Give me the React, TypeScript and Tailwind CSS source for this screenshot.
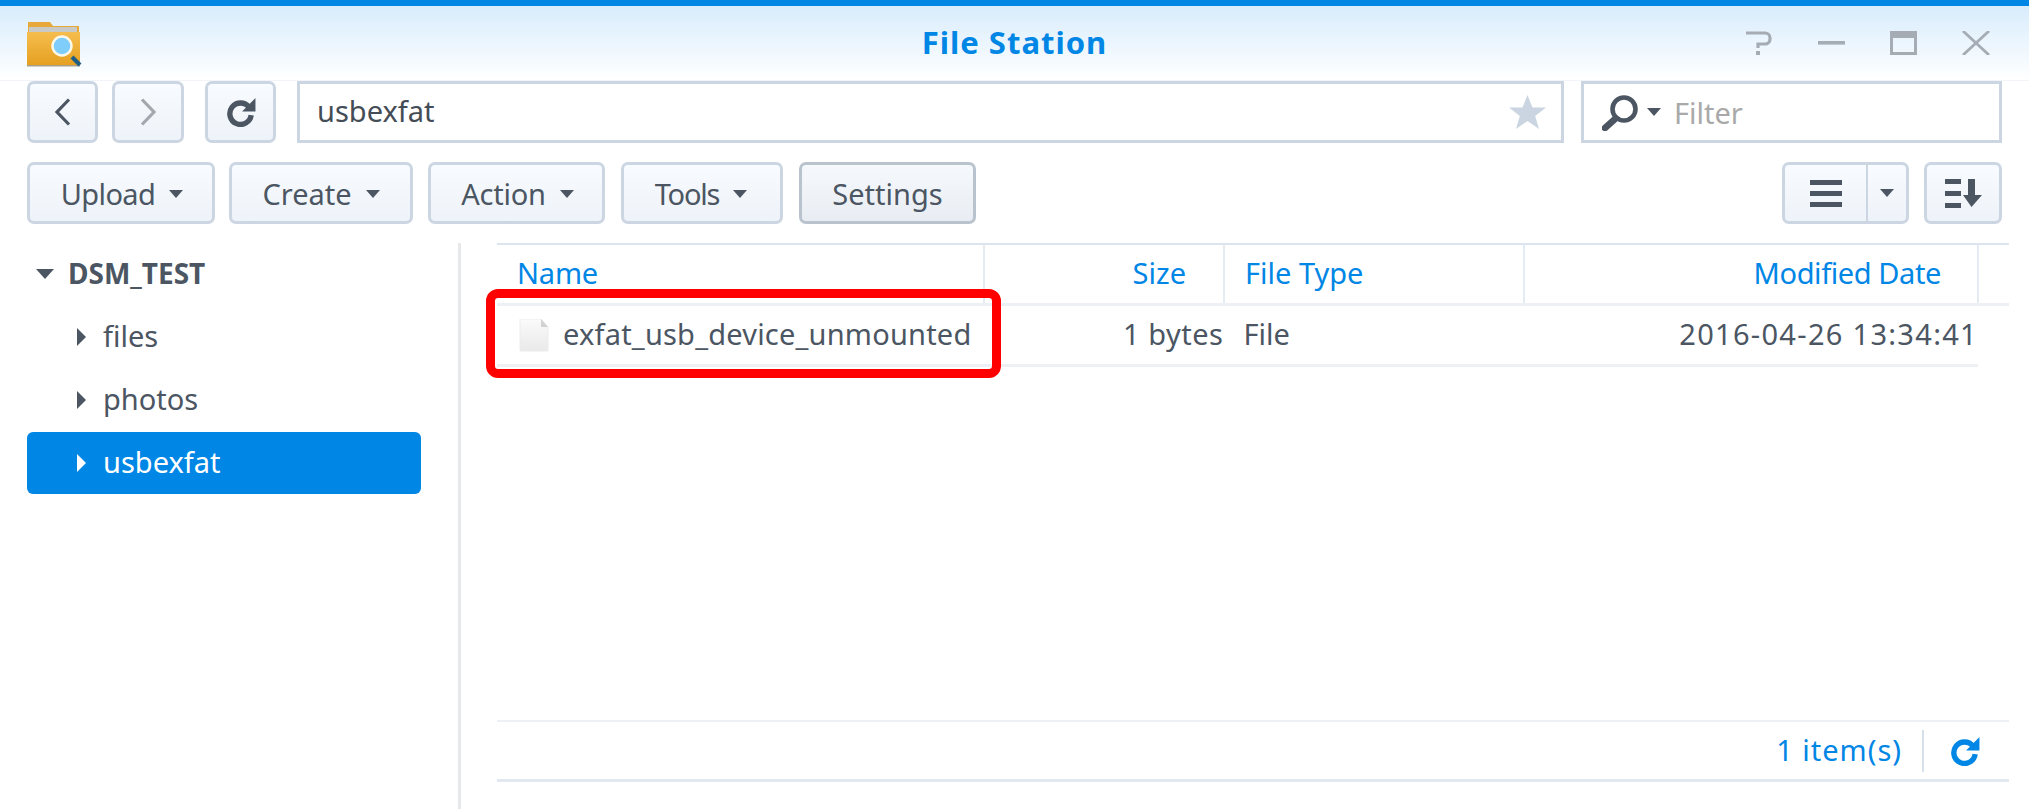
import React from "react";

const Caret = ({ className = "" }: { className?: string }) => (
  <svg width="14" height="8" viewBox="0 0 14 8" className={className}>
    <path d="M0 0h14L7 8z" fill="#4c5663" />
  </svg>
);

const Side = ({ color = "#4c5663" }: { color?: string }) => (
  <svg width="9" height="18" viewBox="0 0 9 18" className="shrink-0">
    <path d="M0 0l9 9-9 9z" fill={color} />
  </svg>
);

const Refresh = ({ color, size }: { color: string; size: number }) => (
  <svg width={size} height={size} viewBox="0 0 28 28">
    <path d="M21.5 9.5A10 10 0 1 0 23.5 17" fill="none" stroke={color} strokeWidth="5" />
    <path d="M27.5 1V13.500H15z" fill={color} />
  </svg>
);

const Btn = ({ label, caret, strong, className = "" }: { label: string; caret?: boolean; strong?: boolean; className?: string }) => (
  <div
    className={
      "h-[62px] flex items-center justify-center gap-[14px] rounded-[7px] border-[3px] text-[29px] text-[#4c5663] " +
      (strong
        ? "border-[#b9c3ce] bg-gradient-to-b from-[#f6f9fc] to-[#e8edf3] "
        : "border-[#ccd6e2] bg-gradient-to-b from-[#f8fbff] to-[#eef3f9] ") +
      className
    }
  >
    <span className="mt-[2px]">{label}</span>
    {caret && <Caret className="mt-[2px]" />}
  </div>
);

const IconBtn = ({ children, w }: { children: React.ReactNode; w: string }) => (
  <div className={"h-[62px] flex items-center justify-center rounded-[7px] border-[3px] border-[#ccd6e2] bg-gradient-to-b from-[#f8fbff] to-[#eef3f9] " + w}>
    {children}
  </div>
);

const TreeRow = ({ label, active }: { label: string; active?: boolean }) => (
  <div
    className={
      "h-[62px] mb-[1px] flex items-center gap-[17px] pl-[50px] rounded-[6px] text-[29px] " +
      (active ? "bg-[#0086e5] text-white" : "text-[#4c5663]")
    }
  >
    <Side color={active ? "#ffffff" : "#4c5663"} />
    <span className="-mt-[2px]">{label}</span>
  </div>
);

export default function App() {
  return (
    <div
      className="relative w-[2029px] h-[809px] overflow-hidden bg-white flex flex-col"
      style={{ fontFamily: '"Noto Sans", sans-serif' }}
    >
      {/* Title bar */}
      <div className="h-[6px] bg-[#0086e5] shrink-0" />
      <div className="h-[75px] shrink-0 relative flex items-center justify-center bg-gradient-to-b from-[#d8ecfc] to-[#ffffff] border-b border-[#f1f4f8]">
        <svg width="56" height="46" viewBox="0 0 56 46" className="absolute left-[26px] top-[15px]">
          <defs>
            <linearGradient id="folder" x1="0" y1="0" x2="0" y2="1">
              <stop offset="0" stopColor="#f6bd4e" />
              <stop offset="1" stopColor="#e5a021" />
            </linearGradient>
          </defs>
          <path d="M2 1h22l3 4h26v12H2z" fill="#e9a93a" />
          <rect x="3" y="6" width="48" height="10" fill="#c9c9c6" />
          <path d="M1 11h53v33H1z" fill="url(#folder)" />
          <path d="M1 44h53v1.5H1z" fill="#a9a08a" />
          <path d="M46 36l8 8" stroke="#1f5f86" strokeWidth="4" />
          <circle cx="36" cy="25" r="9.5" fill="#7fcdfb" stroke="#fdf8e8" strokeWidth="2.4" />
        </svg>
        <span className="text-[31px] font-bold tracking-[1px] text-[#0086e5] -mt-[1px]">File Station</span>
        <div className="absolute right-[39px] top-[25px] flex items-center gap-[45px] h-[24px]">
          <svg width="27" height="24" viewBox="0 0 27 24">
            <path d="M0 2h19a5 5 0 0 1 5 5v1a5 5 0 0 1-5 5h-7v4" fill="none" stroke="#a5acb4" strokeWidth="3.2" />
            <rect x="10" y="20" width="4" height="4" fill="#a5acb4" />
          </svg>
          <svg width="27" height="24" viewBox="0 0 27 24">
            <rect y="10" width="27" height="3.6" fill="#a5acb4" />
          </svg>
          <svg width="27" height="24" viewBox="0 0 27 24">
            <rect x="1.5" y="1.5" width="24" height="21" fill="none" stroke="#a5acb4" strokeWidth="3" />
            <rect y="0" width="27" height="7" fill="#a5acb4" />
          </svg>
          <svg width="28" height="24" viewBox="0 0 28 24">
            <path d="M1 0l26 24M27 0L1 24" stroke="#a5acb4" strokeWidth="2.8" />
          </svg>
        </div>
      </div>

      {/* Address row */}
      <div className="flex items-center h-[62px] pl-[27px] pr-[27px] shrink-0">
        <IconBtn w="w-[71px] mr-[14px]">
          <svg width="17" height="28" viewBox="0 0 17 28">
            <path d="M15 1.5L3 14l12 12.5" fill="none" stroke="#4c5663" strokeWidth="3.2" />
          </svg>
        </IconBtn>
        <IconBtn w="w-[72px] mr-[21px]">
          <svg width="17" height="28" viewBox="0 0 17 28">
            <path d="M2 1.5L14 14 2 26.5" fill="none" stroke="#a2a8ae" strokeWidth="3.2" />
          </svg>
        </IconBtn>
        <IconBtn w="w-[71px] mr-[21px]">
          <Refresh color="#4c5663" size={30} />
        </IconBtn>
        <div className="w-[1267px] h-[62px] flex items-center justify-between border-[3px] border-[#ccd6e2] pl-[17px] pr-[15px] text-[29px] text-[#444c56] mr-[17px]">
          <span className="-mt-[2px]">usbexfat</span>
          <svg width="37" height="34" viewBox="0 0 37 34">
            <path d="M18.5 0l5 12.5H37l-10.800 8.500L30 34 18.500 26 7 34l3.800-13L0 12.500h13.500z" fill="#cbd5e1" />
          </svg>
        </div>
        <div className="flex-1 h-[62px] flex items-center border-[3px] border-[#ccd6e2] pl-[18px]">
          <svg width="37" height="37" viewBox="0 0 37 37">
            <circle cx="22" cy="15" r="11.500" fill="none" stroke="#4c5663" strokeWidth="4.600" />
            <path d="M13 25L3 34" stroke="#4c5663" strokeWidth="6.500" strokeLinecap="round" />
          </svg>
          <Caret className="ml-[8px]" />
          <span className="ml-[13px] mt-[2px] text-[29px] text-[#a9a9a9]">Filter</span>
        </div>
      </div>

      {/* Action row */}
      <div className="flex items-center h-[62px] mt-[19px] pl-[27px] pr-[27px] shrink-0">
        <div className="flex gap-[15px]">
          <Btn label="Upload" caret className="w-[188px] tracking-[-0.6px] pl-[2px]" />
          <Btn label="Create" caret className="w-[184px] -ml-[1px]" />
          <Btn label="Action" caret className="w-[177px] pl-[2px] tracking-[-0.2px]" />
          <Btn label="Tools" caret className="w-[162px] ml-[1px] tracking-[-1.2px] pr-[2px]" />
          <Btn label="Settings" strong className="w-[177px] ml-[1px]" />
        </div>
        <div className="ml-auto flex gap-[15px]">
          <div className="w-[127px] h-[62px] flex rounded-[7px] border-[3px] border-[#ccd6e2] bg-gradient-to-b from-[#f8fbff] to-[#eef3f9]">
            <div className="w-[83px] flex items-center justify-center border-r-[2px] border-[#ccd6e2]">
              <svg width="32" height="27" viewBox="0 0 32 27">
                <path d="M0 0h32v5H0zM0 11h32v5H0zM0 22h32v5H0z" fill="#4c5663" />
              </svg>
            </div>
            <div className="flex-1 flex items-center justify-center">
              <Caret />
            </div>
          </div>
          <IconBtn w="w-[78px]">
            <svg width="37" height="29" viewBox="0 0 37 29">
              <path d="M0 0h16v5H0zM0 12h16v5H0zM0 24h16v5H0z" fill="#4c5663" />
              <path d="M23 0h7v16h7L26.500 28 18 16h5z" fill="#4c5663" />
            </svg>
          </IconBtn>
        </div>
      </div>

      {/* Body */}
      <div className="flex flex-1 mt-[19px] min-h-0">
        <div className="w-[461px] shrink-0 pl-[27px] pr-[37px] border-r-[3px] border-[#e6e8ea]">
          <div className="h-[62px] mb-[1px] flex items-center gap-[14px] pl-[9px] text-[28px] font-bold text-[#4c5663]">
            <svg width="18" height="10" viewBox="0 0 18 10">
              <path d="M0 0h18L9 10z" fill="#4c5663" />
            </svg>
            <span className="-mt-[2px]">DSM_TEST</span>
          </div>
          <TreeRow label="files" />
          <TreeRow label="photos" />
          <TreeRow label="usbexfat" active />
        </div>

        <div className="flex-1 flex flex-col pl-[36px] pr-[20px] min-w-0">
          <div className="h-[63px] shrink-0 flex border-t-[2px] border-b-[3px] border-t-[#dce5ef] border-b-[#edf1f6] text-[29px] text-[#0086e5]">
            <div className="w-[488px] pl-[20px] flex items-center border-r-[2px] border-[#e4ebf3]"><span className="-mt-[2px] tracking-[-0.2px]">Name</span></div>
            <div className="w-[240px] pr-[37px] flex items-center justify-end border-r-[2px] border-[#e4ebf3]"><span className="-mt-[2px]">Size</span></div>
            <div className="w-[300px] pl-[20px] flex items-center border-r-[2px] border-[#e4ebf3]"><span className="-mt-[2px]">File Type</span></div>
            <div className="w-[454px] pr-[36px] flex items-center justify-end tracking-[-0.4px] border-r-[2px] border-[#e4ebf3]"><span className="-mt-[2px]">Modified Date</span></div>
          </div>
          <div className="h-[61px] w-[1481px] shrink-0 flex items-center border-b-[3px] border-[#edf1f6] text-[29px] text-[#4c5663]">
            <div className="w-[487px] pl-[22px] flex items-center gap-[14px]">
              <svg width="30" height="33" viewBox="0 0 30 33" className="shrink-0">
                <defs>
                  <linearGradient id="doc" x1="0" y1="0" x2="0" y2="1">
                    <stop offset="0" stopColor="#fbfbfb" />
                    <stop offset="1" stopColor="#e9e9e9" />
                  </linearGradient>
                </defs>
                <path d="M1 0h21l7 8v24H1z" fill="url(#doc)" stroke="#ececec" strokeWidth="1" />
                <path d="M22 0l7 8h-7z" fill="#d2d2d2" />
              </svg>
              <span className="tracking-[0.2px] -mt-[3px]">exfat_usb_device_unmounted</span>
            </div>
            <div className="w-[240px] text-right tracking-[0.5px] -mt-[3px]">1 bytes</div>
            <div className="w-[300px] pl-[20px] -mt-[3px]">File</div>
            <div className="w-[455px] text-right tracking-[1.3px] -mt-[3px]">2016-04-26 13:34:41</div>
          </div>
          <div className="flex-1" />
          <div className="h-[62px] mb-[27px] shrink-0 flex items-center justify-end border-t-[2px] border-b-[3px] border-t-[#edf1f6] border-b-[#e2e8f0] text-[29px] text-[#0086e5]">
            <span className="mr-[20px] tracking-[1px] -mt-[2px]">1 item(s)</span>
            <div className="w-[2px] h-[42px] bg-[#d6e0ea] mr-[26px]" />
            <div className="mr-[29px] flex">
              <Refresh color="#0086e5" size={30} />
            </div>
          </div>
        </div>
      </div>

      {/* Red annotation */}
      <div className="absolute left-[486px] top-[289px] w-[515px] h-[89px] border-[9px] border-[#ff0000] rounded-[12px]" />
    </div>
  );
}
